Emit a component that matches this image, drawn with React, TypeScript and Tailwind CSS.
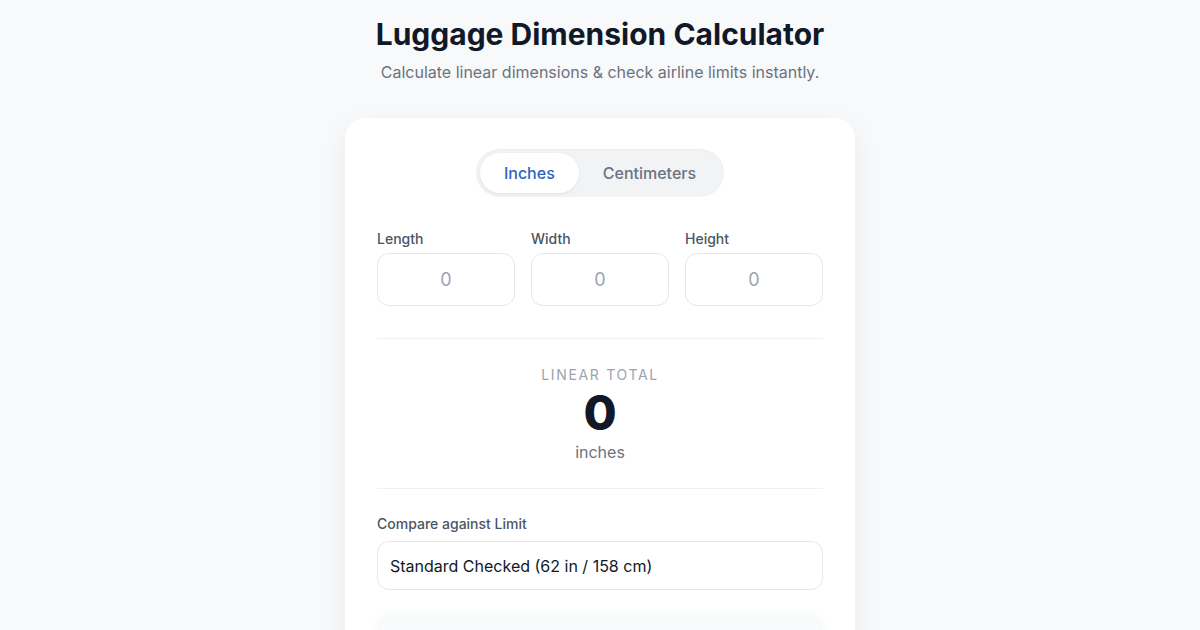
import { useState } from "react";

export default function App() {
  const [unit, setUnit] = useState<"in" | "cm">("in");

  return (
    <div
      className="min-h-screen bg-[#f8f9fb] flex flex-col items-center pt-[14px] text-[#111827]"
      style={{ fontFamily: "Inter, 'Noto Sans', sans-serif" }}
    >
      <h1 className="text-[30px] leading-[40px] font-bold text-[#111827]">
        Luggage Dimension Calculator
      </h1>
      <p className="mt-[6px] text-base leading-6 text-[#6b7280]">
        Calculate linear dimensions &amp; check airline limits instantly.
      </p>

      <div className="mt-[34px] w-[510px] bg-white rounded-[20px] shadow-[0_10px_30px_rgba(15,23,42,0.06)] px-8 pt-[31px] pb-10">
        {/* unit toggle */}
        <div className="flex justify-center">
          <div className="flex p-1 rounded-full bg-[#f1f3f5] shadow-[inset_0_1px_2px_rgba(0,0,0,0.04)]">
            <button
              onClick={() => setUnit("in")}
              className={`h-10 px-6 rounded-full text-base font-medium ${
                unit === "in"
                  ? "bg-white text-[#2f63c0] shadow-[0_1px_3px_rgba(0,0,0,0.08)]"
                  : "text-[#6b7280]"
              }`}
            >
              Inches
            </button>
            <button
              onClick={() => setUnit("cm")}
              className={`h-10 px-6 rounded-full text-base font-medium ${
                unit === "cm"
                  ? "bg-white text-[#2f63c0] shadow-[0_1px_3px_rgba(0,0,0,0.08)]"
                  : "text-[#6b7280]"
              }`}
            >
              Centimeters
            </button>
          </div>
        </div>

        {/* dimensions */}
        <div className="mt-8 grid grid-cols-3 gap-4">
          {["Length", "Width", "Height"].map((label) => (
            <div key={label} className="flex flex-col gap-1">
              <label className="text-sm leading-5 font-medium text-[#4b5563]">
                {label}
              </label>
              <input
                type="text"
                inputMode="decimal"
                placeholder="0"
                className="h-[53px] w-full rounded-xl border border-[#e5e7eb] text-center text-lg text-[#111827] placeholder:text-[#9ca3af] outline-none"
              />
            </div>
          ))}
        </div>

        <div className="mt-8 border-t border-[#f0f1f3]" />

        {/* total */}
        <div className="pt-[26px] pb-6 flex flex-col items-center">
          <div className="text-sm leading-5 tracking-[0.12em] text-[#9ca3af]">
            LINEAR TOTAL
          </div>
          <div className="mt-1 text-5xl leading-[48px] font-extrabold text-[#111827]">
            0
          </div>
          <div className="mt-[3px] text-base leading-6 text-[#6b7280]">
            {unit === "in" ? "inches" : "centimeters"}
          </div>
        </div>

        <div className="border-t border-[#f0f1f3]" />

        {/* limit */}
        <div className="mt-[22px]">
          <label className="text-sm leading-5 font-medium text-[#4b5563]">
            Compare against Limit
          </label>
          <div className="mt-[6px] h-[49px] rounded-xl border border-[#e5e7eb] flex items-center px-3 text-base text-[#111827]">
            Standard Checked (62 in / 158 cm)
          </div>
        </div>

        <div className="mt-6 h-16 rounded-xl bg-[#f8fafc] shadow-[0_0_12px_rgba(248,250,252,1)]" />
      </div>
    </div>
  );
}
